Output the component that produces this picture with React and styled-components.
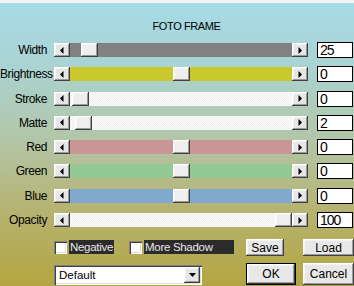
import React from 'react';
import styled, { createGlobalStyle } from 'styled-components';

const GlobalStyle = createGlobalStyle`
  html, body {
    margin: 0;
    padding: 0;
    background: #fff;
  }
`;

const raised = `
  box-shadow:
    inset -1px -1px #404040,
    inset 1px 1px #ffffff,
    inset -2px -2px #9a9a9a,
    inset 2px 2px #f4f4f4;
`;

const sunken = `
  box-shadow:
    inset 1px 1px #808080,
    inset 2px 2px #404040,
    inset -1px -1px #ffffff,
    inset -2px -2px #e0e0e0;
`;

const Frame = styled.div`
  width: 354px;
  height: 286px;
  box-sizing: border-box;
  border-top: 3px solid #f2f2f2;
  overflow: hidden;
  background: linear-gradient(
    180deg,
    #a7dbe8 0%,
    #aad3d2 22%,
    #b2c6a8 48%,
    #b6b474 72%,
    #b3a540 100%
  );
  font-family: "Liberation Sans", Arial, sans-serif;
  color: #000;
`;

const Title = styled.div`
  padding: 16px 0 0 19px;
  height: 14px;
  line-height: 14px;
  text-align: center;
  font-size: 11px;
  letter-spacing: -0.4px;
`;

const Rows = styled.div`
  margin-top: 9px;
  display: flex;
  flex-direction: column;
  gap: 8.3px;
`;

const Row = styled.div`
  display: flex;
  align-items: center;
  height: 16px;
`;

const Label = styled.div`
  width: 47px;
  margin-right: 7px;
  text-align: right;
  font-size: 12px;
  letter-spacing: -0.4px;
  white-space: nowrap;
`;

const Slider = styled.div`
  width: 254px;
  height: 14px;
  display: flex;
`;

const ArrowButton = styled.div`
  width: 16px;
  height: 14px;
  flex: none;
  background: #e6e6e6;
  ${raised}
  display: flex;
  align-items: center;
  justify-content: center;
`;

const Track = styled.div`
  position: relative;
  flex: 1;
  background: ${p =>
    p.$color
      ? p.$color
      : 'repeating-conic-gradient(#ffffff 0 25%, #ececec 0 50%) 0 0 / 2px 2px'};
`;

const Thumb = styled.div`
  position: absolute;
  top: 0;
  left: ${p => p.$pos}px;
  width: 17px;
  height: 14px;
  background: #eeeeee;
  ${raised}
`;

const Value = styled.div`
  margin-left: 9px;
  width: 36px;
  height: 16px;
  box-sizing: border-box;
  border: 1px solid #000;
  background: #fff;
  padding-left: 2px;
  font-size: 14px;
  line-height: 14px;
  letter-spacing: -1px;
`;

const Bottom = styled.div`
  margin-top: 11px;
  padding-left: 54px;
  display: flex;
  flex-direction: column;
  gap: 7px;
`;

const BottomRow = styled.div`
  display: flex;
  align-items: ${p => (p.$end ? 'flex-end' : 'flex-start')};
  height: ${p => p.$h}px;
`;

const Check = styled.label`
  display: flex;
  align-items: center;
  margin-top: 1px;
  margin-left: ${p => p.$ml || 0}px;
`;

const Box = styled.span`
  width: 13px;
  height: 13px;
  background: #fff;
  ${sunken}
`;

const CheckText = styled.span`
  margin-left: 2px;
  width: ${p => p.$w}px;
  height: 14px;
  box-sizing: border-box;
  padding-left: 1px;
  background: #2b2b2b;
  color: #e8e8e8;
  font-size: 11.5px;
  letter-spacing: -0.3px;
  line-height: 14px;
  white-space: nowrap;
`;

const Button = styled.div`
  margin-left: ${p => p.$ml}px;
  width: ${p => p.$w}px;
  height: ${p => p.$h}px;
  box-sizing: border-box;
  display: flex;
  align-items: center;
  justify-content: center;
  background: #e8e8e8;
  font-size: 12px;
  ${raised}
  ${p =>
    p.$default &&
    `
    border: 1px solid #000;
  `}
`;

const Select = styled.div`
  position: relative;
  width: 148px;
  height: 20px;
  box-sizing: border-box;
  background: #fff;
  ${sunken}
  padding-left: 5px;
  font-size: 11.5px;
  line-height: 20px;
`;

const DropButton = styled.div`
  position: absolute;
  right: 2px;
  top: 2px;
  width: 16px;
  height: 16px;
  background: #e6e6e6;
  ${raised}
  display: flex;
  align-items: center;
  justify-content: center;
`;

const LeftArrow = () => (
  <svg width="4" height="7" viewBox="0 0 4 7">
    <polygon points="3.5,0 3.5,7 0,3.5" fill="#000" />
  </svg>
);

const RightArrow = () => (
  <svg width="4" height="7" viewBox="0 0 4 7">
    <polygon points="0.5,0 0.5,7 4,3.5" fill="#000" />
  </svg>
);

const DownArrow = () => (
  <svg width="7" height="4" viewBox="0 0 7 4">
    <polygon points="0,0 7,0 3.5,4" fill="#000" />
  </svg>
);

const sliders = [
  { label: 'Width', color: '#818181', pos: 11, value: '25' },
  { label: 'Brightness', color: '#c9c92e', pos: 103, value: '0' },
  { label: 'Stroke', pos: 2, value: '0' },
  { label: 'Matte', pos: 5, value: '2' },
  { label: 'Red', color: '#c99597', pos: 103, value: '0' },
  { label: 'Green', color: '#95c994', pos: 103, value: '0' },
  { label: 'Blue', color: '#81a9cd', pos: 103, value: '0' },
  { label: 'Opacity', pos: 205, value: '100' },
];

export default function App() {
  return (
    <>
      <GlobalStyle />
      <Frame>
        <Title>FOTO FRAME</Title>
        <Rows>
          {sliders.map(s => (
            <Row key={s.label}>
              <Label>{s.label}</Label>
              <Slider>
                <ArrowButton>
                  <LeftArrow />
                </ArrowButton>
                <Track $color={s.color}>
                  <Thumb $pos={s.pos} />
                </Track>
                <ArrowButton>
                  <RightArrow />
                </ArrowButton>
              </Slider>
              <Value>{s.value}</Value>
            </Row>
          ))}
        </Rows>
        <Bottom>
          <BottomRow $h={17}>
            <Check>
              <Box />
              <CheckText $w={45}>Negative</CheckText>
            </Check>
            <Check $ml={15}>
              <Box />
              <CheckText $w={90}>More Shadow</CheckText>
            </Check>
            <Button $ml={12} $w={38} $h={17}>Save</Button>
            <Button $ml={19} $w={51} $h={17}>Load</Button>
          </BottomRow>
          <BottomRow $h={22} $end>
            <Select>
              Default
              <DropButton>
                <DownArrow />
              </DropButton>
            </Select>
            <Button $ml={44} $w={50} $h={22} $default>OK</Button>
            <Button $ml={7} $w={51} $h={22}>Cancel</Button>
          </BottomRow>
        </Bottom>
      </Frame>
    </>
  );
}
